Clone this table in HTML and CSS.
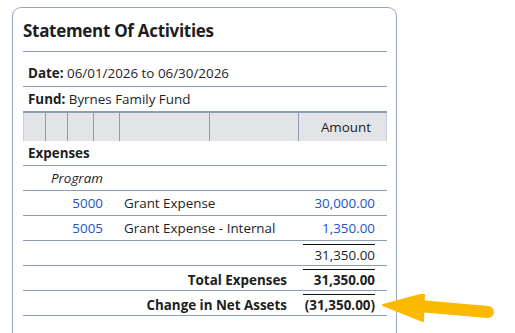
FILE: index.html
```html
<!DOCTYPE html>
<html>
<head>
<meta charset="utf-8">
<link rel="stylesheet" href="styles.css">
</head>
<body>
<div class="card">
  <div class="title">Statement Of Activities</div>
  <div class="meta meta-date"><b>Date:</b> 06/01/2026 to 06/30/2026</div>
  <div class="meta meta-fund"><b>Fund:</b> Byrnes Family Fund</div>
  <div class="grid head">
    <div class="hc"></div><div class="hc"></div><div class="hc"></div><div class="hc"></div><div class="hc"></div><div class="hc"></div><div class="hc last">Amount</div>
  </div>
  <div class="grid row"><div class="section">Expenses</div></div>
  <div class="grid row"><div class="group">Program</div></div>
  <div class="grid row">
    <div class="acct">5000</div><div class="name">Grant Expense</div><div class="amt link">30,000.00</div>
  </div>
  <div class="grid row">
    <div class="acct">5005</div><div class="name">Grant Expense - Internal</div><div class="amt link">1,350.00</div>
  </div>
  <div class="grid row">
    <div class="amt over"><span class="ol">31,350.00</span></div>
  </div>
  <div class="grid row strong">
    <div class="label">Total Expenses</div><div class="amt over"><span class="ol">31,350.00</span></div>
  </div>
  <div class="grid row strong">
    <div class="label">Change in Net Assets</div><div class="amt over"><span class="ol">(31,350.00)</span></div>
  </div>
</div>
<svg class="arrow" width="120" height="40" viewBox="0 0 120 40">
  <line x1="38" y1="12" x2="107" y2="18" stroke="#fbb900" stroke-width="12" stroke-linecap="round"/>
  <polygon points="2,11 43,0 42,27" fill="#fbb900" stroke="#fbb900" stroke-width="2" stroke-linejoin="round"/>
</svg>
</body>
</html>
```
FILE: styles.css
```css
html, body { margin: 0; padding: 0; background: #fff; }
body {
  font-family: "Open Sans", "Noto Sans", sans-serif;
  font-size: 13.4px;
  color: #1e1e1e;
  position: relative;
  width: 515px;
  height: 333px;
  overflow: hidden;
}
.card {
  margin: 7px 0 0 12px;
  width: 364px;
  height: 326px;
  padding: 0 9px 0 10px;
  border: 1px solid #9aa6bd;
  border-bottom: 0;
  border-radius: 9px 9px 0 0;
}
.title {
  font-size: 17px;
  font-weight: 700;
  line-height: 24px;
  padding: 11px 0 8px;
  border-bottom: 1px solid #8e9bb4;
  letter-spacing: -0.3px;
}
.meta { line-height: 18px; padding: 0 5px; }
.meta b { font-weight: 700; }
.meta-date { padding-top: 12px; padding-bottom: 4px; border-bottom: 1px solid #8e9bb4; }
.meta-fund { padding-top: 3px; padding-bottom: 3px; }
.grid {
  display: grid;
  grid-template-columns: 22px 22px 26px 26px 90px 89px 89px;
}
.head {
  border-top: 2px solid #8e9bb4;
  background: #e3e4e8;
  height: 28px;
}
.hc { border-left: 1px solid #8e9bb4; line-height: 28px; }
.hc:first-child { border-left-color: #c9ced9; }
.hc.last { text-align: right; padding-right: 15px; border-right: 1px solid #c9ced9; }
.row { border-bottom: 1px solid #8e9bb4; line-height: 24px; min-height: 24px; }
.section { grid-column: 1 / 8; font-weight: 700; padding-left: 5px; }
.group { grid-column: 2 / 8; font-style: italic; padding-left: 6px; }
.acct { grid-column: 1 / 5; text-align: right; padding-right: 16px; color: #2453c6; }
.name { grid-column: 5 / 7; padding-left: 5px; white-space: nowrap; }
.label { grid-column: 1 / 7; text-align: right; padding-right: 11px; line-height: 20px; padding-top: 4px; }
.amt { grid-column: 7 / 8; text-align: right; padding-right: 12px; }
.link { color: #2453c6; }
.over { padding-top: 3px; line-height: 20px; padding-left: 5px; }
.ol { display: block; border-top: 1px solid #111; }
.strong { font-weight: 700; }
.arrow { position: absolute; left: 381px; top: 294px; }
```
